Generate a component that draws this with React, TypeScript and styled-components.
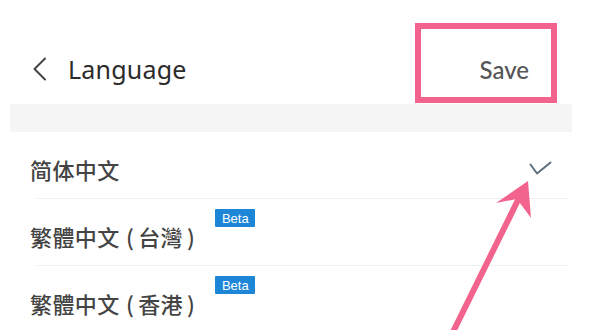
import React from "react";
import styled, { createGlobalStyle } from "styled-components";

const GlobalStyle = createGlobalStyle`
  html, body {
    margin: 0;
    padding: 0;
    background: #ffffff;
  }
  body {
    font-family: "Noto Sans", "Noto Sans CJK SC", sans-serif;
  }
`;

interface LanguageItem {
  name: string;
  region?: string;
  beta?: boolean;
  selected?: boolean;
}

const languages: LanguageItem[] = [
  { name: "简体中文", selected: true },
  { name: "繁體中文", region: "台灣", beta: true },
  { name: "繁體中文", region: "香港", beta: true },
];

const App: React.FC = () => {
  return (
    <Page>
      <GlobalStyle />
      <Screen>
        <Header>
          <BackButton aria-label="back">
            <svg width="16" height="24" viewBox="0 0 16 24" fill="none">
              <path
                d="M13 1.5L2.5 12L13 22.5"
                stroke="#444"
                strokeWidth="2"
                strokeLinecap="round"
                strokeLinejoin="round"
              />
            </svg>
          </BackButton>
          <Title>Language</Title>
          <SaveButton>Save</SaveButton>
          <Highlight />
        </Header>
        <Band />
        <List>
          {languages.map((item, idx) => (
            <Row key={idx}>
              <Label>
                {item.name}
                {item.region && (
                  <>
                    {" "}
                    <Paren side="open">(</Paren>
                    {item.region}
                    <Paren side="close">)</Paren>
                  </>
                )}
              </Label>
              {item.beta && <Badge>Beta</Badge>}
              {item.selected && (
                <Check width="24" height="14" viewBox="0 0 24 14" fill="none">
                  <path
                    d="M2.5 3.5L9 12.5L22.5 1.5"
                    stroke="#5f6f7d"
                    strokeWidth="2"
                    strokeLinecap="round"
                    strokeLinejoin="round"
                  />
                </Check>
              )}
            </Row>
          ))}
        </List>
      </Screen>
      <Arrow width="600" height="330" viewBox="0 0 600 330" fill="none">
        <path
          d="M452 334L520 196"
          stroke="#f2648e"
          strokeWidth="6"
          strokeLinecap="round"
        />
        <path d="M528 181L496 203L517 199L531 218Z" fill="#f2648e" />
      </Arrow>
    </Page>
  );
};

const Page = styled.div`
  position: relative;
  width: 600px;
  height: 330px;
  overflow: hidden;
  background: #fff;
`;

const Screen = styled.div`
  margin-left: 10px;
  width: 562px;
  display: flex;
  flex-direction: column;
`;

const Header = styled.div`
  position: relative;
  height: 104px;
  box-sizing: border-box;
  padding: 34px 43px 0 22px;
  display: flex;
  align-items: center;
`;

const BackButton = styled.div`
  display: flex;
  align-items: center;
  width: 16px;
  height: 24px;
`;

const Title = styled.div`
  margin-left: 20px;
  font-family: "Noto Sans", sans-serif;
  font-size: 25px;
  color: #2b2b2b;
  letter-spacing: 0.2px;
`;

const SaveButton = styled.div`
  margin-left: auto;
  font-family: "Lato", "Noto Sans", sans-serif;
  font-size: 24px;
  font-weight: 500;
  color: #555;
`;

const Highlight = styled.div`
  position: absolute;
  left: 405px;
  top: 23px;
  width: 142px;
  height: 80px;
  box-sizing: border-box;
  border: 6px solid #f2648e;
`;

const Band = styled.div`
  height: 28px;
  background: #f5f5f5;
`;

const List = styled.div`
  display: flex;
  flex-direction: column;
`;

const Row = styled.div`
  position: relative;
  height: 67px;
  box-sizing: border-box;
  padding: 6px 20px 0 20px;
  display: flex;
  align-items: center;

  &::after {
    content: "";
    position: absolute;
    left: 27px;
    right: 4px;
    bottom: 0;
    height: 1px;
    background: #efefef;
  }
`;

const Label = styled.span`
  font-family: "Noto Sans CJK SC", "Noto Sans", sans-serif;
  font-size: 22px;
  font-weight: 500;
  letter-spacing: 0.4px;
  color: #444;
`;

const Paren = styled.span<{ side: "open" | "close" }>`
  margin-left: ${(p) => (p.side === "open" ? "1px" : "4px")};
  margin-right: ${(p) => (p.side === "open" ? "4px" : "0")};
`;

const Badge = styled.span`
  align-self: flex-start;
  margin: 4px 0 0 20px;
  width: 40px;
  height: 18px;
  display: flex;
  align-items: center;
  justify-content: center;
  background: #1d86d6;
  color: #fff;
  font-family: "Liberation Sans", sans-serif;
  font-size: 13px;
  border-radius: 1px;
`;

const Check = styled.svg`
  margin-left: auto;
  margin-right: 0;
  margin-top: -1px;
`;

const Arrow = styled.svg`
  position: absolute;
  left: 0;
  top: 0;
  pointer-events: none;
`;

export default App;
